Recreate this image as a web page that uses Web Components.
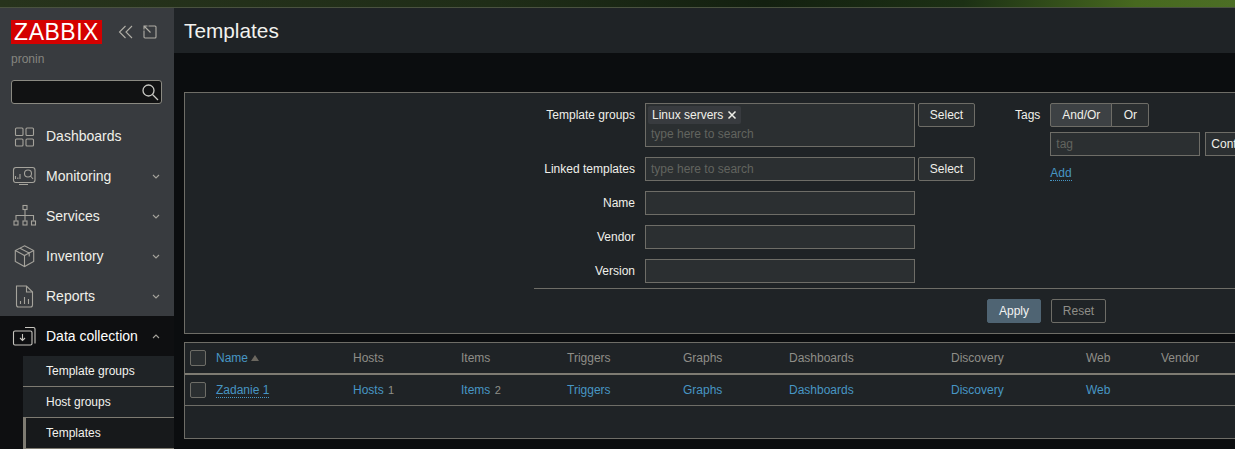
<!DOCTYPE html>
<html>
<head>
<meta charset="utf-8">
<title>Templates</title>
<style>
html, body { margin: 0; padding: 0; height: 100%; background: #0b0d0f; overflow: hidden; }
body { font: 12px "Liberation Sans", Arial, sans-serif; color: #f2f2f2; display: flex; flex-direction: column; }
</style>
</head>
<body>
<top-strip></top-strip>
<zbx-layout>
	<zbx-sidebar slot="side">
		<nav-item label="Dashboards" icon="dashboards"></nav-item>
		<nav-item label="Monitoring" icon="monitoring" arrow="down"></nav-item>
		<nav-item label="Services" icon="services" arrow="down"></nav-item>
		<nav-item label="Inventory" icon="inventory" arrow="down"></nav-item>
		<nav-item label="Reports" icon="reports" arrow="down"></nav-item>
		<nav-item label="Data collection" icon="collection" arrow="up" open></nav-item>
		<sub-nav>
			<sub-item>Template groups</sub-item>
			<sub-item>Host groups</sub-item>
			<sub-item selected>Templates</sub-item>
		</sub-nav>
	</zbx-sidebar>
	<page-header>Templates</page-header>
	<filter-box></filter-box>
	<templates-table></templates-table>
</zbx-layout>

<script>
(function () {
	const ICONS = {
		dashboards: '<rect x="1.5" y="3" width="7.5" height="7.5" rx="1"/><rect x="12" y="3" width="7.5" height="7.5" rx="1"/><rect x="1.5" y="14" width="7.5" height="7" rx="1"/><rect x="12" y="14" width="7.5" height="7" rx="1"/>',
		monitoring: '<rect x="-0.5" y="2.5" width="21.5" height="15" rx="2.5"/><path d="M5 19.500h9M1.500 14v-3M3.800 14v-1.500M6 14V9"/><circle cx="14" cy="8.500" r="3.500"/><path d="M16.500 11l2.500 3"/>',
		services: '<rect x="9" y="0.500" width="4" height="4"/><path d="M11 4.500v6M2 15.500v-5h17.500v5M11 10.500v5"/><rect x="0" y="16" width="4" height="4"/><rect x="9" y="16" width="4" height="4"/><rect x="17.500" y="16" width="4" height="4"/>',
		inventory: '<path d="M10.500 0.800l9.200 4.700v11l-9.200 5-9.200-5v-11z"/><path d="M1.300 5.500l9.200 5 9.200-5M10.500 10.500v11.300M6 3.200l9.200 4.900v3.500"/>',
		reports: '<path d="M2.500 1h10l6 6v13a2 2 0 0 1-2 2h-12a2 2 0 0 1-2-2z"/><path d="M12.500 1v6h6M6.500 19v-3M10.500 19v-7M14.500 19v-5"/>',
		collection: '<rect x="-0.500" y="6" width="18.500" height="14" rx="1.500"/><path d="M11 2.500h8.500a1.500 1.500 0 0 1 1.500 1.500v14.500M8.500 9v6.500M6 13l2.500 2.500L11 13"/>'
	};

	function makeTemplate(html) {
		const tpl = document.createElement('template');
		tpl.innerHTML = html;
		return tpl;
	}

	class ShadowBase extends HTMLElement {
		constructor() {
			super();
			this.attachShadow({mode: 'open'});
			this.shadowRoot.appendChild(this.constructor.tpl.content.cloneNode(true));
		}
	}

	class TopStrip extends ShadowBase {}
	TopStrip.tpl = makeTemplate(`
		<style>
		:host { display: block; flex: none; height: 8px; box-sizing: border-box; border-bottom: 1px solid #4a5240;
			background: linear-gradient(to right, #27331c 0%, #1f2d17 40%, #132010 62%, #1c3014 78%, #47691f 92%, #4c6e25 100%); }
		</style>
	`);

	class ZbxLayout extends ShadowBase {}
	ZbxLayout.tpl = makeTemplate(`
		<style>
		:host { display: flex; flex: 1; min-height: 0; }
		#side { flex: none; width: 174px; }
		#main { flex: 1; min-width: 0; overflow: hidden; display: flex; flex-direction: column; }
		</style>
		<div id="side"><slot name="side"></slot></div>
		<div id="main"><slot></slot></div>
	`);

	class ZbxSidebar extends ShadowBase {}
	ZbxSidebar.tpl = makeTemplate(`
		<style>
		:host { display: block; height: 441px; overflow: hidden; background: #383b3f; }
		#top { height: 108px; box-sizing: border-box; padding: 12px 12px 0 11px; }
		#brand { display: flex; align-items: center; gap: 16px; }
		#logo { width: 91px; height: 24px; background: #d40000; color: #fff; font-size: 23px; line-height: 25px;
			letter-spacing: 0.5px; text-align: center; flex: none; overflow: hidden; }
		#tools { display: flex; gap: 9px; }
		svg { display: block; fill: none; stroke: #b0aea6; stroke-width: 1.1; }
		#user { margin-top: 8px; color: #85857f; font-size: 12px; line-height: 14px; }
		#search { margin-top: 14px; height: 24px; box-sizing: border-box; border: 1px solid #8b8a82; border-radius: 3px;
			background: #111213; display: flex; justify-content: flex-end; align-items: center; padding-right: 1px; }
		#search svg { stroke: #c9c9c4; stroke-width: 1.3; }
		</style>
		<div id="top">
			<div id="brand">
				<div id="logo">ZABBIX</div>
				<div id="tools">
					<svg width="16" height="14" viewBox="0 0 16 14"><path d="M7.500 1L1.500 7l6 6M14 1L8 7l6 6"/></svg>
					<svg width="14" height="14" viewBox="0 0 14 14"><path d="M5.500 1H12a1 1 0 0 1 1 1v10a1 1 0 0 1-1 1H2a1 1 0 0 1-1-1V5.500M1 4.500V1h3.500M1.500 1.500L7.500 7.500" /></svg>
				</div>
			</div>
			<div id="user">pronin</div>
			<div id="search">
				<svg width="20" height="20" viewBox="0 0 20 20"><circle cx="8.500" cy="8.500" r="5.500"/><path d="M12.500 12.500L18 18"/></svg>
			</div>
		</div>
		<slot></slot>
	`);

	class NavItem extends ShadowBase {
		connectedCallback() {
			this.shadowRoot.getElementById('label').textContent = this.getAttribute('label');
			const icon = this.getAttribute('icon');
			this.shadowRoot.getElementById('icon').innerHTML = ICONS[icon] || '';
			const arrow = this.getAttribute('arrow');
			const elArrow = this.shadowRoot.getElementById('arrow');
			if (arrow)
				elArrow.innerHTML = arrow === 'up' ? '<path d="M1 5l3-3 3 3"/>' : '<path d="M1 2l3 3 3-3"/>';
		}
	}
	NavItem.tpl = makeTemplate(`
		<style>
		:host { display: flex; align-items: center; height: 40px; padding-left: 14px; box-sizing: border-box;
			font-size: 14px; color: #f0f0ea; }
		:host([open]) { background: #0e0f11; color: #fff; }
		#icon { width: 23px; height: 23px; flex: none; fill: none; stroke: #a5a39c; stroke-width: 1.1; margin-right: 9px; overflow: visible; }
		:host([open]) #icon { stroke: #c8c6c0; }
		#label { flex: 1; }
		#arrow { width: 8px; height: 7px; flex: none; margin-right: 14px; fill: none; stroke: #a5a39c; stroke-width: 1.100; }
		</style>
		<svg id="icon" viewBox="0 0 23 23"></svg>
		<span id="label"></span>
		<svg id="arrow" viewBox="0 0 8 7"></svg>
	`);

	class SubNav extends ShadowBase {}
	SubNav.tpl = makeTemplate(`
		<style>
		:host { display: block; background: #0e0f11; padding: 0 0 0 23px; height: 100px; }
		</style>
		<slot></slot>
	`);

	class SubItem extends ShadowBase {}
	SubItem.tpl = makeTemplate(`
		<style>
		:host { display: flex; align-items: center; height: 31px; box-sizing: border-box; padding-left: 23px;
			background: #1f2326; border-bottom: 1px solid #7e7b72; font-size: 12px; color: #f2f2ee; }
		:host([selected]) { border-left: 3px solid #7e7b72; padding-left: 20px; background: #17191b; }
		</style>
		<slot></slot>
	`);

	class PageHeader extends ShadowBase {}
	PageHeader.tpl = makeTemplate(`
		<style>
		:host { display: flex; align-items: center; flex: none; height: 45px; padding: 1px 0 0 10px; box-sizing: border-box;
			background: #1f2326; font-size: 20.800px; color: #f2f2ee; }
		</style>
		<slot></slot>
	`);

	class ZbxInput extends ShadowBase {}
	ZbxInput.tpl = makeTemplate(`
		<style>
		:host { display: block; box-sizing: border-box; height: 24px; width: 270px; border: 1px solid #6e6d67;
			background: #2b2f31; padding: 0 5px; line-height: 22px; font-size: 12px; color: #62645f; }
		</style>
		<slot></slot>
	`);

	class ZbxButton extends ShadowBase {}
	ZbxButton.tpl = makeTemplate(`
		<style>
		:host { display: flex; align-items: center; justify-content: center; box-sizing: border-box; height: 24px; flex: none;
			border: 1px solid #6e6d67; border-radius: 2px; background: #2b2f31; font-size: 12px; color: #f0f0ea; }
		:host([primary]) { background: #4f6473; border-color: #4f6473; color: #f2f2f2; }
		:host([muted]) { background: #1f2326; color: #8f8e88; }
		</style>
		<slot></slot>
	`);

	class FilterRow extends ShadowBase {
		connectedCallback() {
			this.shadowRoot.getElementById('label').textContent = this.getAttribute('label');
		}
	}
	FilterRow.tpl = makeTemplate(`
		<style>
		:host { display: flex; align-items: flex-start; gap: 10px; }
		#label { width: 101px; flex: none; text-align: right; line-height: 24px; font-size: 12px; color: #f0f0ea; }
		#ctl { display: flex; gap: 3px; }
		</style>
		<span id="label"></span>
		<div id="ctl"><slot></slot></div>
	`);

	class FilterBox extends ShadowBase {}
	FilterBox.tpl = makeTemplate(`
		<style>
		:host { display: block; flex: none; margin: 39px 0 0 10px; height: 242px; box-sizing: border-box; width: 1100px;
			border: 1px solid #6e6d67; border-right: none; background: #1f2326; padding: 0 0 0 349px; overflow: hidden; }
		#cols { display: flex; height: 196px; box-sizing: border-box; padding-top: 10px; border-bottom: 1px solid #6e6d67; }
		#left { display: flex; flex-direction: column; gap: 10px; width: 481px; flex: none; }
		#multi { height: 44px; padding: 2px 5px 0 2px; line-height: 20px; }
		#chip { display: flex; align-items: center; gap: 4px; width: max-content; height: 18px; padding: 0 4px; box-sizing: border-box;
			background: #383b3f; color: #f0f0ea; border-radius: 2px; }
		#chip svg { display: block; stroke: #f0f0ea; stroke-width: 1.500; fill: none; }
		#ph { padding: 0 0 0 3px; }
		#right { display: flex; gap: 10px; }
		#tagl { line-height: 24px; color: #f0f0ea; }
		#tags { display: flex; flex-direction: column; gap: 5px; }
		#seg { display: flex; }
		#seg zbx-button:first-child { width: 62px; background: #3d4144; border-radius: 2px 0 0 2px; }
		#seg zbx-button:last-child { width: 38px; margin-left: -1px; border-radius: 0 2px 2px 0; }
		#tagrow { display: flex; gap: 5px; }
		#add { color: #4796c4; line-height: 14px; border-bottom: 1px dotted #4796c4; width: max-content; margin: 5px 0 0 0; }
		#bottom { display: flex; gap: 10px; padding: 10px 0 0 453px; }
		</style>
		<div id="cols">
			<div id="left">
				<filter-row label="Template groups">
					<zbx-input id="multi"><div id="chip">Linux servers <svg width="10" height="10" viewBox="0 0 10 10"><path d="M1.500 1.500l7 7M8.500 1.500l-7 7"/></svg></div><div id="ph">type here to search</div></zbx-input>
					<zbx-button style="width:57px">Select</zbx-button>
				</filter-row>
				<filter-row label="Linked templates">
					<zbx-input>type here to search</zbx-input>
					<zbx-button style="width:57px">Select</zbx-button>
				</filter-row>
				<filter-row label="Name"><zbx-input></zbx-input></filter-row>
				<filter-row label="Vendor"><zbx-input></zbx-input></filter-row>
				<filter-row label="Version"><zbx-input></zbx-input></filter-row>
			</div>
			<div id="right">
				<span id="tagl">Tags</span>
				<div id="tags">
					<div id="seg"><zbx-button>And/Or</zbx-button><zbx-button>Or</zbx-button></div>
					<div id="tagrow">
						<zbx-input style="width:150px">tag</zbx-input>
						<zbx-button style="width:100px;justify-content:flex-start;padding-left:5px;border-radius:0">Contains</zbx-button>
					</div>
					<div id="add">Add</div>
				</div>
			</div>
		</div>
		<div id="bottom">
			<zbx-button primary style="width:54px">Apply</zbx-button>
			<zbx-button muted style="width:55px">Reset</zbx-button>
		</div>
	`);

	class TemplatesTable extends ShadowBase {}
	TemplatesTable.tpl = makeTemplate(`
		<style>
		:host { display: block; flex: none; margin: 8px 0 0 10px; width: 1100px; height: 97px; box-sizing: border-box;
			border: 1px solid #6e6d67; border-right: none; background: #1f2326; font-size: 12px; }
		table { border-collapse: collapse; table-layout: fixed; width: 1100px; }
		th { height: 30px; padding: 0; text-align: left; font-weight: normal; color: #8f8e88; border-bottom: 2px solid #7e7b72; }
		td { height: 30px; padding: 0; color: #8f8e88; border-bottom: 1px solid #6e6d67; }
		a { color: #4796c4; text-decoration: none; }
		.under { border-bottom: 1px dotted #4796c4; }
		.count { font-size: 11px; margin-left: 1px; }
		.box { display: block; box-sizing: border-box; width: 16px; height: 16px; margin-left: 5px; border: 1px solid #6e6d67; border-radius: 2px; background: #2b2f31; }
		.sort { display: inline-block; margin-left: 3px; border: 4px solid transparent; border-bottom: 6px solid #6b675f; border-top: none; vertical-align: 1px; }
		</style>
		<table>
			<colgroup>
				<col style="width:31px"><col style="width:137px"><col style="width:108px"><col style="width:106px">
				<col style="width:116px"><col style="width:106px"><col style="width:162px"><col style="width:135px">
				<col style="width:75px"><col>
			</colgroup>
			<tr>
				<th><span class="box"></span></th>
				<th><a>Name</a><span class="sort"></span></th>
				<th>Hosts</th><th>Items</th><th>Triggers</th><th>Graphs</th><th>Dashboards</th><th>Discovery</th><th>Web</th><th>Vendor</th>
			</tr>
			<tr>
				<td><span class="box"></span></td>
				<td><a class="under">Zadanie 1</a></td>
				<td><a>Hosts</a> <span class="count">1</span></td><td><a>Items</a> <span class="count">2</span></td><td><a>Triggers</a></td><td><a>Graphs</a></td><td><a>Dashboards</a></td><td><a>Discovery</a></td><td><a>Web</a></td><td></td>
			</tr>
		</table>
	`);

	customElements.define('top-strip', TopStrip);
	customElements.define('zbx-layout', ZbxLayout);
	customElements.define('zbx-sidebar', ZbxSidebar);
	customElements.define('nav-item', NavItem);
	customElements.define('sub-nav', SubNav);
	customElements.define('sub-item', SubItem);
	customElements.define('page-header', PageHeader);
	customElements.define('zbx-input', ZbxInput);
	customElements.define('zbx-button', ZbxButton);
	customElements.define('filter-row', FilterRow);
	customElements.define('filter-box', FilterBox);
	customElements.define('templates-table', TemplatesTable);
})();
</script>
</body>
</html>
